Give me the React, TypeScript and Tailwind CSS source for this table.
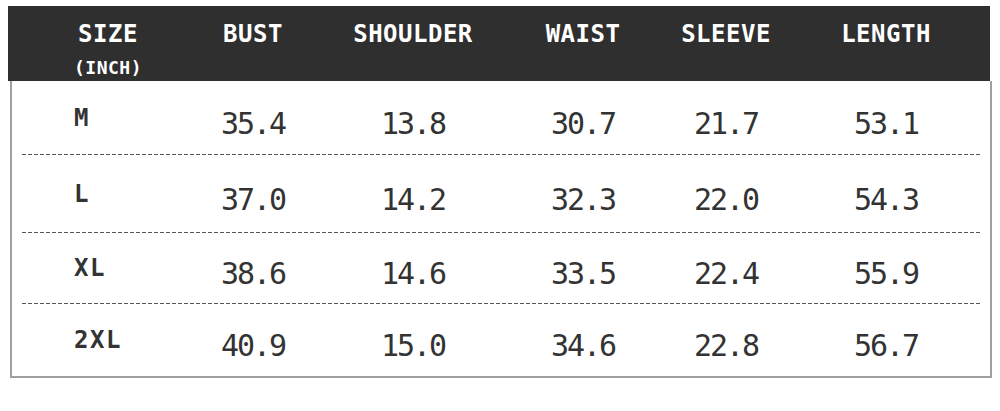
import React from "react";

const heads = ["BUST", "SHOULDER", "WAIST", "SLEEVE", "LENGTH"];

const rows = [
    { size: "M", h: "h-[73px]", vals: ["35.4", "13.8", "30.7", "21.7", "53.1"] },
    { size: "L", h: "h-[77px]", vals: ["37.0", "14.2", "32.3", "22.0", "54.3"] },
    { size: "XL", h: "h-[70px]", vals: ["38.6", "14.6", "33.5", "22.4", "55.9"] },
    { size: "2XL", h: "h-[72px]", vals: ["40.9", "15.0", "34.6", "22.8", "56.7"] },
];

const mono = `font-['DejaVu_Sans_Mono',monospace]`;

const Dash = () => (
    <div className="mx-[10px] h-px bg-[linear-gradient(to_right,#555_4px,transparent_4px)] bg-[length:6px_1px]"></div>
);

const App = () => {
    return (
        <div className={`h-[411px] w-[1000px] bg-white ${mono}`}>
            <div className="pl-[8px] pt-[6px]">
                <div className="grid h-[75px] w-[982px] grid-cols-[200px_90px_230px_110px_176px_144px] bg-[#2f2f2f] pt-[16px] text-white">
                    <div className="flex flex-col items-center text-[24px] font-bold leading-none tracking-[0.5px]">
                        <span>SIZE</span>
                        <span className="mt-[13px] text-[18px] tracking-[0.5px]">(INCH)</span>
                    </div>
                    {heads.map((h) => (
                        <div
                            key={h}
                            className="text-center text-[24px] font-bold leading-none tracking-[0.5px]"
                        >
                            {h}
                        </div>
                    ))}
                </div>
                <div className="ml-[2px] w-[982px] border-2 border-t-0 border-[#a0a0a0] text-[#333]">
                    {rows.map((r, i) => (
                        <div key={r.size}>
                            {i > 0 && <Dash />}
                            <div
                                className={`grid grid-cols-[196px_90px_230px_110px_176px_144px] items-center ${r.h}`}
                            >
                                <div className="pl-[62px] text-[24px] font-bold leading-none tracking-[1.5px]">
                                    {r.size}
                                </div>
                                {r.vals.map((v, j) => (
                                    <div
                                        key={j}
                                        className="pt-[12px] text-center text-[30px] leading-none tracking-[-2px]"
                                    >
                                        {v}
                                    </div>
                                ))}
                            </div>
                        </div>
                    ))}
                </div>
            </div>
        </div>
    );
};

export default App;
